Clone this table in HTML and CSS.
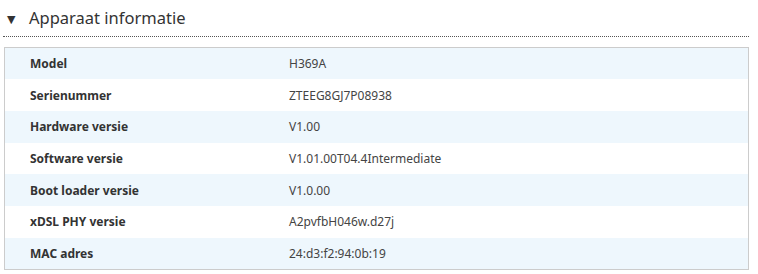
FILE: index.html
```html
<!DOCTYPE html>
<html>
<head>
<meta charset="utf-8">
<link rel="stylesheet" href="styles.css">
</head>
<body>
<div class="section">
  <div class="section-head">
    <span class="caret">&#9660;</span>
    <span class="title">Apparaat informatie</span>
  </div>
  <table class="info">
    <tr><th>Model</th><td>H369A</td></tr>
    <tr><th>Serienummer</th><td>ZTEEG8GJ7P08938</td></tr>
    <tr><th>Hardware versie</th><td>V1.00</td></tr>
    <tr><th>Software versie</th><td>V1.01.00T04.4Intermediate</td></tr>
    <tr><th>Boot loader versie</th><td>V1.0.00</td></tr>
    <tr><th>xDSL PHY versie</th><td>A2pvfbH046w.d27j</td></tr>
    <tr><th>MAC adres</th><td>24:d3:f2:94:0b:19</td></tr>
  </table>
</div>
</body>
</html>
```
FILE: styles.css
```css
html, body {
  margin: 0;
  padding: 0;
  background: #fff;
}
body {
  font-family: "Noto Sans", "Open Sans", "DejaVu Sans", sans-serif;
  color: #333;
}
.section {
  width: 746px;
  padding: 0 0 0 3px;
}
.section-head {
  display: flex;
  align-items: center;
  height: 37px;
  border-bottom: 1px dotted #555;
  box-sizing: border-box;
}
.caret {
  font-size: 11px;
  color: #333;
  margin-left: 4px;
  width: 22px;
}
.title {
  font-size: 16.5px;
  color: #333;
  line-height: 1;
  margin-top: 0;
}
.info {
  margin: 10px 0 0 1px;
  width: 745px;
  border: 1px solid #cccccc;
  border-collapse: collapse;
  font-size: 12px;
}
.info tr {
  height: 31.7px;
}
.info tr:nth-child(odd) {
  background: #eef7fd;
}
.info th {
  text-align: left;
  font-weight: bold;
  color: #333;
  padding: 0 0 0 25px;
  width: 258px;
}
.info td {
  color: #444;
  padding: 0 0 0 1px;
}
```
